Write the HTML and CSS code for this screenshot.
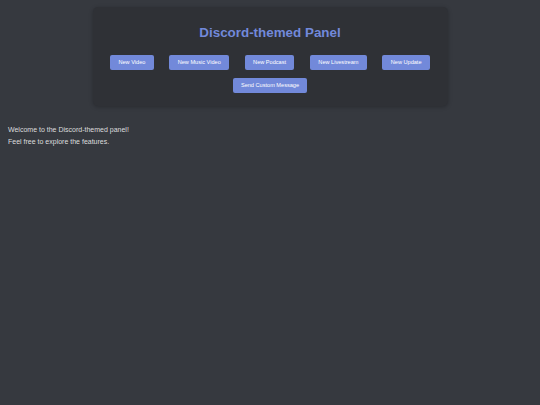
FILE: index.html
```html
<!DOCTYPE html>
<html lang="en">
<head>
<meta charset="utf-8">
<title>Discord-themed Panel</title>
<link rel="stylesheet" href="styles.css">
</head>
<body>
  <div class="panel">
    <h1 class="title">Discord-themed Panel</h1>
    <div class="row">
      <button class="btn">New Video</button>
      <button class="btn">New Music Video</button>
      <button class="btn">New Podcast</button>
      <button class="btn">New Livestream</button>
      <button class="btn">New Update</button>
    </div>
    <div class="row">
      <button class="btn">Send Custom Message</button>
    </div>
  </div>
  <div class="content">
    <p class="line">Welcome to the Discord-themed panel!</p>
    <p class="line">Feel free to explore the features.</p>
  </div>
</body>
</html>
```

FILE: styles.css
```css
html, body {
  margin: 0;
  padding: 0;
  background: #36393f;
  font-family: "Liberation Sans", Arial, sans-serif;
}
body {
  min-height: 405px;
}
.panel {
  box-sizing: border-box;
  width: 355px;
  margin: 7px auto 0;
  padding: 17.9px 0 13.3px;
  background: #2f3136;
  border-radius: 5px;
  box-shadow: 0 1px 4px rgba(0, 0, 0, 0.25);
}
.title {
  margin: 0 0 14.1px;
  text-align: center;
  font-size: 13.4px;
  line-height: 16px;
  font-weight: bold;
  color: #7289da;
}
.row {
  display: flex;
  justify-content: center;
  gap: 15.7px;
}
.row + .row {
  margin-top: 8.5px;
}
.btn {
  margin: 0;
  border: none;
  border-radius: 2px;
  background: #7289da;
  color: #ffffff;
  font-family: "Liberation Sans", Arial, sans-serif;
  font-size: 5.6px;
  line-height: 6.7px;
  padding: 4px 8.3px;
}
.content {
  padding: 18.3px 8px 0;
}
.line {
  margin: 0;
  font-size: 7px;
  line-height: 11.3px;
  color: #dcddde;
}
```
